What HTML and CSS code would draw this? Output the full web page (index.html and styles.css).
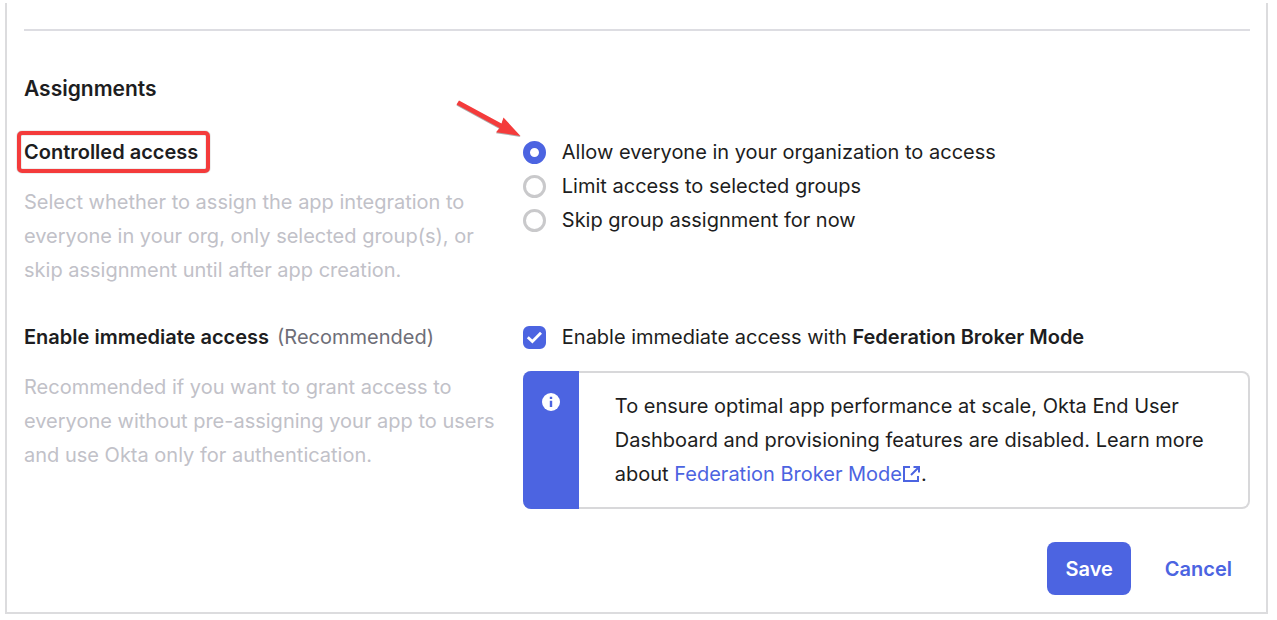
FILE: index.html
```html
<!DOCTYPE html>
<html lang="en">
<head>
<meta charset="utf-8">
<meta name="viewport" content="width=device-width, initial-scale=1">
<title>Assignments</title>
<link rel="stylesheet" href="styles.css">
</head>
<body>
<form class="panel">
  <hr class="divider">
  <h2 class="title">Assignments</h2>
  <div class="row">
    <div class="info">
      <h3 class="label" id="access-label"><span class="highlight">Controlled access</span></h3>
      <p class="hint">Select whether to assign the app integration to everyone in your org, only selected group(s), or skip assignment until after app creation.</p>
    </div>
    <div class="field" role="radiogroup" aria-labelledby="access-label">
      <label class="option"><input class="radio" type="radio" name="access" checked><span>Allow everyone in your organization to access</span></label>
      <label class="option"><input class="radio" type="radio" name="access"><span>Limit access to selected groups</span></label>
      <label class="option"><input class="radio" type="radio" name="access"><span>Skip group assignment for now</span></label>
      <svg class="arrow" viewBox="0 0 66 40" aria-hidden="true">
        <path d="M3 2.4 45.500 25.500 47.500 19.500 64.500 38 40 34.200 43.500 30 .5 6.400z" fill="#777" opacity=".6"/>
        <path d="M3 1.400 45.500 24.500 47.500 18.500 64.500 37 40 33.200 43.500 29 .5 5.400z" fill="#f43b3b"/>
      </svg>
    </div>
  </div>
  <div class="row">
    <div class="info">
      <h3 class="label">Enable immediate access <span class="optional">(Recommended)</span></h3>
      <p class="hint">Recommended if you want to grant access to everyone without pre-assigning your app to users and use Okta only for authentication.</p>
    </div>
    <div class="field">
      <label class="option">
        <span class="check-wrap">
          <input class="check" type="checkbox" checked>
          <svg class="tick" viewBox="0 0 23 23" aria-hidden="true"><path d="m4.8 11.2 4.6 4.4 8.6-8.8" fill="none" stroke="#fff" stroke-width="2.8"/></svg>
        </span>
        <span>Enable immediate access with <strong>Federation Broker Mode</strong></span>
      </label>
      <div class="callout">
        <div class="callout-side">
          <svg class="info-icon" viewBox="0 0 18 18" aria-hidden="true"><circle cx="9" cy="9" r="9" fill="#fff"/><path d="M7.8 7.8h2.4V14H7.8zM7.8 3.8h2.4v2.3H7.8z" fill="#4c64e1"/></svg>
        </div>
        <p class="callout-text">To ensure optimal app performance at scale, Okta End User Dashboard and provisioning features are disabled. Learn more about <a class="link" href="#">Federation Broker Mode<svg class="external" viewBox="0 0 19 18" aria-hidden="true"><path d="M8 2H2v14h14v-5M11.500 2H17v5.500M16.500 2.500 9 10" fill="none" stroke="currentColor" stroke-width="2"/></svg></a>.</p>
      </div>
    </div>
  </div>
  <div class="actions">
    <button class="button primary" type="submit">Save</button>
    <button class="button plain" type="button">Cancel</button>
  </div>
</form>
</body>
</html>
```
FILE: styles.css
```css
* {
  box-sizing: border-box;
}

body {
  margin: 0;
  padding: 3px 9px 6px 5px;
  background: #fff;
  color: #1d1d21;
  font-family: Inter, "Liberation Sans", sans-serif;
  font-size: 20px;
  line-height: 34px;
}

h2, h3, p {
  margin: 0;
}

strong {
  font-weight: 600;
}

.panel {
  padding: 26px 16px 17px 17px;
  border: 2px solid #dcdcde;
  border-top: 0;
}

.divider {
  height: 2px;
  margin: 0 0 41px;
  border: 0;
  background: #dddde2;
}

.title {
  margin-bottom: 29px;
  font-size: 21px;
  font-weight: 600;
}

.row {
  display: grid;
  grid-template-columns: 2fr 3fr;
  column-gap: 14px;
  margin-bottom: 33px;
}

.label {
  margin-bottom: 16px;
  font-size: 20px;
  font-weight: 600;
}

.highlight {
  position: relative;
}

.highlight::after {
  content: "";
  position: absolute;
  inset: -9px -12px -9px -7px;
  border: 4px solid #f43b3b;
  border-radius: 5px;
  box-shadow: 0 0 1px #555, inset 0 0 1px #555;
}

.optional {
  margin-left: 3px;
  color: #6e6e78;
  font-weight: 400;
}

.hint {
  color: #c1c1c8;
}

.field {
  position: relative;
}

.option {
  display: flex;
  align-items: center;
  gap: 16px;
}

.radio {
  appearance: none;
  flex: none;
  width: 23px;
  height: 23px;
  margin: 0;
  border: 3px solid #c9c9cb;
  border-radius: 50%;
  background: #fff;
}

.radio:checked {
  border: 7px solid #4c64e1;
}

.arrow {
  position: absolute;
  top: -36px;
  left: -67px;
  width: 66px;
  height: 40px;
}

.check-wrap {
  position: relative;
  display: flex;
  flex: none;
}

.check {
  appearance: none;
  width: 23px;
  height: 23px;
  margin: 0;
  border: 2px solid #c9c9cb;
  border-radius: 6px;
}

.check:checked {
  border-color: #4c64e1;
  background: #4c64e1;
}

.tick {
  position: absolute;
  inset: 0;
  pointer-events: none;
}

.check:not(:checked) + .tick {
  display: none;
}

.callout {
  display: flex;
  margin-top: 17px;
  border: 2px solid #d8d8da;
  border-left: 0;
  border-radius: 8px;
}

.callout-side {
  flex: none;
  width: 56px;
  margin: -2px 0;
  padding-top: 22px;
  border-radius: 8px 0 0 8px;
  background: #4c64e1;
  text-align: center;
  line-height: 0;
}

.info-icon {
  width: 18px;
  height: 18px;
}

.callout-text {
  padding: 16px 36px;
}

.link {
  color: #4c64e1;
  text-decoration: none;
}

.external {
  width: 19px;
  height: 18px;
  vertical-align: -2px;
}

.actions {
  display: flex;
  justify-content: flex-end;
}

.button {
  height: 53px;
  padding: 0 18px;
  border: 0;
  border-radius: 8px;
  background: none;
  font: inherit;
  font-weight: 600;
}

.primary {
  margin-right: 16px;
  background: #4c64e1;
  color: #fff;
}

.plain {
  color: #4c64e1;
}
```
